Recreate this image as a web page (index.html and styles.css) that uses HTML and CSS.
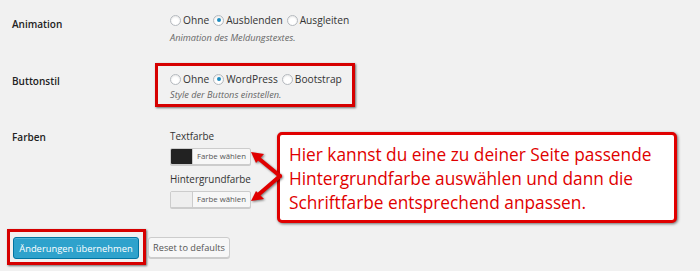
FILE: index.html
```html
<!DOCTYPE html>
<html lang="de">
<head>
<meta charset="utf-8">
<title>Einstellungen</title>
<link rel="stylesheet" href="styles.css">
</head>
<body>
<div class="form">
  <div class="row row-anim">
    <div class="label">Animation</div>
    <div class="field">
      <div class="radios">
        <span class="radio"></span><span class="opt">Ohne</span>
        <span class="radio checked"></span><span class="opt">Ausblenden</span>
        <span class="radio"></span><span class="opt">Ausgleiten</span>
      </div>
      <div class="desc">Animation des Meldungstextes.</div>
    </div>
  </div>
  <div class="row row-button">
    <div class="label">Buttonstil</div>
    <div class="field marked">
      <div class="radios">
        <span class="radio"></span><span class="opt">Ohne</span>
        <span class="radio checked"></span><span class="opt">WordPress</span>
        <span class="radio"></span><span class="opt">Bootstrap</span>
      </div>
      <div class="desc">Style der Buttons einstellen.</div>
    </div>
  </div>
  <div class="row row-colors">
    <div class="label">Farben</div>
    <div class="field">
      <div class="sub">Textfarbe</div>
      <div class="picker"><span class="swatch dark"></span><span class="pick-text">Farbe wählen</span></div>
      <div class="sub sub2">Hintergrundfarbe</div>
      <div class="picker"><span class="swatch light"></span><span class="pick-text">Farbe wählen</span></div>
    </div>
  </div>
  <div class="actions">
    <div class="primary-mark"><button class="btn-primary">Änderungen übernehmen</button></div>
    <button class="btn-secondary">Reset to defaults</button>
  </div>
</div>
<div class="callout">Hier kannst du eine zu deiner Seite passende Hintergrundfarbe auswählen und dann die Schriftfarbe entsprechend anpassen.</div>
<svg class="arrows" width="40" height="60" viewBox="0 0 40 60">
  <g fill="none" stroke="#e00000" stroke-width="4" stroke-linecap="round" stroke-linejoin="round">
    <path d="M31 29 L9 11"/>
    <path d="M31 29 L9 48"/>
  </g>
  <polygon points="2,5 15,7 7,16" fill="#e00000"/>
  <polygon points="2,54 7,44 15,52" fill="#e00000"/>
</svg>
</body>
</html>
```

FILE: styles.css
```css
html, body {
  margin: 0;
  padding: 0;
}
body {
  background: #f1f1f1;
  font-family: "Open Sans", "Noto Sans", sans-serif;
  color: #222;
  position: relative;
  width: 700px;
  height: 271px;
  overflow: hidden;
}
.form {
  padding-left: 12px;
}
.row {
  display: flex;
}
.label {
  width: 158px;
  flex: none;
  font-size: 10px;
  font-weight: 600;
  line-height: 14px;
  color: #222;
}
.row-anim {
  padding-top: 13px;
}
.row-anim .label {
  padding-top: 4px;
}
.radios {
  display: flex;
  align-items: center;
  height: 14px;
  font-size: 10.2px;
  color: #333;
  white-space: nowrap;
}
.radio {
  width: 9px;
  height: 9px;
  border: 1px solid #b4b9be;
  border-radius: 50%;
  background: #fff;
  box-shadow: inset 0 1px 2px rgba(0,0,0,.1);
  margin-right: 2px;
  position: relative;
  flex: none;
}
.radio.checked::after {
  content: "";
  position: absolute;
  left: 2.5px;
  top: 2.5px;
  width: 4px;
  height: 4px;
  border-radius: 50%;
  background: #1e8cbe;
}
.opt {
  margin-right: 4px;
}
.desc {
  font-size: 9.2px;
  font-style: italic;
  color: #666;
  line-height: 14px;
  margin-top: 4px;
  white-space: nowrap;
}
.row-button {
  margin-top: 18px;
}
.row-button .label {
  padding-top: 11px;
}
.field.marked {
  margin-left: -15px;
  border: 3px solid #d60000;
  box-shadow: 1px 1px 2px rgba(0,0,0,.55);
  padding: 6px 12px 2px 12px;
  width: 170px;
}
.field.marked .desc {
  margin-top: 2px;
}
.row-colors {
  margin-top: 22px;
}
.row-colors .label {
  padding-top: 1px;
}
.sub {
  font-size: 9.9px;
  line-height: 14px;
  color: #333;
}
.sub2 {
  margin-top: 7px;
}
.picker {
  margin-top: 5px;
  display: flex;
  width: 79px;
  height: 15px;
  border: 1px solid #ccc;
  border-radius: 2px;
  background: #f7f7f7;
  box-shadow: 0 1px 0 #ccc;
  overflow: hidden;
}
.swatch {
  width: 21px;
  flex: none;
  border-right: 1px solid #ccc;
}
.swatch.dark {
  background: #222;
}
.swatch.light {
  background: #eee;
}
.pick-text {
  flex: 1;
  font-size: 7.8px;
  line-height: 15px;
  color: #555;
  text-align: center;
  white-space: nowrap;
}
.actions {
  margin-top: 21px;
  margin-left: -5px;
  display: flex;
  align-items: center;
}
.primary-mark {
  border: 3px solid #d60000;
  box-shadow: 1px 1px 2px rgba(0,0,0,.55);
  padding: 5px 4px 3px 3px;
}
.btn-primary {
  display: block;
  font-family: "Open Sans", sans-serif;
  font-size: 9.4px;
  background: #2ea2cc;
  border: 1px solid #0074a2;
  border-radius: 3px;
  color: #fff;
  height: 22px;
  width: 126px;
  padding: 0;
  white-space: nowrap;
  box-shadow: inset 0 1px 0 rgba(120,200,230,.5);
}
.btn-secondary {
  margin-left: 2px;
  font-family: "Open Sans", sans-serif;
  font-size: 9.2px;
  background: #f7f7f7;
  border: 1px solid #ccc;
  border-radius: 3px;
  color: #555;
  height: 21px;
  width: 82px;
  padding: 0;
  white-space: nowrap;
  box-shadow: 0 1px 0 #ccc;
}
.callout {
  position: absolute;
  left: 277px;
  top: 132px;
  width: 385px;
  height: 77px;
  padding: 8px 0 0 9px;
  background: #fff;
  border: 3px solid #e00000;
  border-radius: 5px;
  box-shadow: 1px 1px 3px rgba(0,0,0,.55);
  color: #e00000;
  font-family: "Open Sans", sans-serif;
  font-size: 17.3px;
  line-height: 24px;
  box-sizing: content-box;
}
.arrows {
  position: absolute;
  left: 249px;
  top: 147px;
  filter: drop-shadow(1px 1px 1px rgba(0,0,0,.5));
}
```
